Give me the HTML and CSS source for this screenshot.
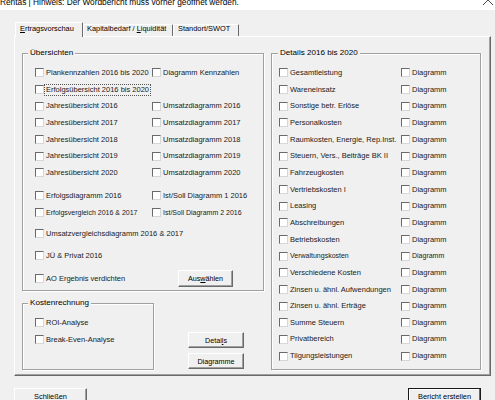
FILE: index.html
```html
<!DOCTYPE html>
<html lang="de">
<head>
<meta charset="utf-8">
<title>Rentas</title>
<link rel="stylesheet" href="styles.css">
</head>
<body>
<div class="titlebar">
  <div class="title">Rentas | Hinweis: Der Wordbericht muss vorher geöffnet werden.</div>
  <svg class="close" width="10" height="6" viewBox="0 0 10 6"><line x1="0" y1="-5" x2="10" y2="5" stroke="#333" stroke-width="0.9"/><line x1="10" y1="-5" x2="0" y2="5" stroke="#333" stroke-width="0.9"/></svg>
</div>
<div class="dialog">
  <div class="tabs">
    <div class="tab active t1"><u>E</u>rtragsvorschau</div>
    <div class="tab t2">Kapitalbedarf / <u>L</u>iquidität</div>
    <div class="tab t3">Standort/SWOT</div>
  </div>
  <div class="panel">
    <div class="col-left">
      <div class="group uebersichten">
        <span class="legend">Übersichten</span>
        <div class="row"><div class="cell c1"><span class="cb"></span><span class="lbl">Plankennzahlen 2016 bis 2020</span></div><div class="cell"><span class="cb"></span><span class="lbl">Diagramm Kennzahlen</span></div></div>
        <div class="row"><div class="cell c1"><span class="cb"></span><span class="lbl focus">Erfolgsübersicht 2016 bis 2020</span></div></div>
        <div class="row"><div class="cell c1"><span class="cb"></span><span class="lbl">Jahresübersicht 2016</span></div><div class="cell"><span class="cb"></span><span class="lbl">Umsatzdiagramm 2016</span></div></div>
        <div class="row"><div class="cell c1"><span class="cb"></span><span class="lbl">Jahresübersicht 2017</span></div><div class="cell"><span class="cb"></span><span class="lbl">Umsatzdiagramm 2017</span></div></div>
        <div class="row"><div class="cell c1"><span class="cb"></span><span class="lbl">Jahresübersicht 2018</span></div><div class="cell"><span class="cb"></span><span class="lbl">Umsatzdiagramm 2018</span></div></div>
        <div class="row"><div class="cell c1"><span class="cb"></span><span class="lbl">Jahresübersicht 2019</span></div><div class="cell"><span class="cb"></span><span class="lbl">Umsatzdiagramm 2019</span></div></div>
        <div class="row"><div class="cell c1"><span class="cb"></span><span class="lbl">Jahresübersicht 2020</span></div><div class="cell"><span class="cb"></span><span class="lbl">Umsatzdiagramm 2020</span></div></div>
        <div class="row m6"><div class="cell c1"><span class="cb"></span><span class="lbl">Erfolgsdiagramm 2016</span></div><div class="cell"><span class="cb"></span><span class="lbl">Ist/Soll Diagramm 1 2016</span></div></div>
        <div class="row"><div class="cell c1"><span class="cb"></span><span class="lbl small">Erfolgsvergleich 2016 &amp; 2017</span></div><div class="cell"><span class="cb"></span><span class="lbl small">Ist/Soll Diagramm 2 2016</span></div></div>
        <div class="row m47"><div class="cell c1"><span class="cb"></span><span class="lbl">Umsatzvergleichsdiagramm 2016 &amp; 2017</span></div></div>
        <div class="row m5"><div class="cell c1"><span class="cb"></span><span class="lbl">JÜ &amp; Privat 2016</span></div></div>
        <div class="row m6"><div class="cell c1"><span class="cb"></span><span class="lbl">AO Ergebnis verdichten</span></div><button class="btn btn-aus">Aus<u>w</u>ählen</button></div>
      </div>
      <div class="lower">
        <div class="group kosten">
          <span class="legend">Kostenrechnung</span>
          <div class="row"><div class="cell"><span class="cb"></span><span class="lbl">ROI-Analyse</span></div></div>
          <div class="row"><div class="cell"><span class="cb"></span><span class="lbl">Break-Even-Analyse</span></div></div>
        </div>
        <div class="btncol">
          <button class="btn btn-sm">Detai<u>l</u>s</button>
          <button class="btn btn-sm">Diagramme</button>
        </div>
      </div>
    </div>
    <div class="col-right">
      <div class="group details">
        <span class="legend">Details 2016 bis 2020</span>
        <div class="row"><div class="cell d1"><span class="cb"></span><span class="lbl">Gesamtleistung</span></div><div class="cell"><span class="cb"></span><span class="lbl">Diagramm</span></div></div>
        <div class="row"><div class="cell d1"><span class="cb"></span><span class="lbl">Wareneinsatz</span></div><div class="cell"><span class="cb"></span><span class="lbl">Diagramm</span></div></div>
        <div class="row"><div class="cell d1"><span class="cb"></span><span class="lbl">Sonstige betr. Erlöse</span></div><div class="cell"><span class="cb"></span><span class="lbl">Diagramm</span></div></div>
        <div class="row"><div class="cell d1"><span class="cb"></span><span class="lbl">Personalkosten</span></div><div class="cell"><span class="cb"></span><span class="lbl">Diagramm</span></div></div>
        <div class="row"><div class="cell d1"><span class="cb"></span><span class="lbl">Raumkosten, Energie, Rep.Inst.</span></div><div class="cell"><span class="cb"></span><span class="lbl">Diagramm</span></div></div>
        <div class="row"><div class="cell d1"><span class="cb"></span><span class="lbl">Steuern, Vers., Beiträge BK II</span></div><div class="cell"><span class="cb"></span><span class="lbl">Diagramm</span></div></div>
        <div class="row"><div class="cell d1"><span class="cb"></span><span class="lbl">Fahrzeugkosten</span></div><div class="cell"><span class="cb"></span><span class="lbl">Diagramm</span></div></div>
        <div class="row"><div class="cell d1"><span class="cb"></span><span class="lbl">Vertriebskosten I</span></div><div class="cell"><span class="cb"></span><span class="lbl">Diagramm</span></div></div>
        <div class="row"><div class="cell d1"><span class="cb"></span><span class="lbl">Leasing</span></div><div class="cell"><span class="cb"></span><span class="lbl">Diagramm</span></div></div>
        <div class="row"><div class="cell d1"><span class="cb"></span><span class="lbl">Abschreibungen</span></div><div class="cell"><span class="cb"></span><span class="lbl">Diagramm</span></div></div>
        <div class="row"><div class="cell d1"><span class="cb"></span><span class="lbl">Betriebskosten</span></div><div class="cell"><span class="cb"></span><span class="lbl">Diagramm</span></div></div>
        <div class="row"><div class="cell d1"><span class="cb"></span><span class="lbl small">Verwaltungskosten</span></div><div class="cell"><span class="cb"></span><span class="lbl small">Diagramm</span></div></div>
        <div class="row"><div class="cell d1"><span class="cb"></span><span class="lbl">Verschiedene Kosten</span></div><div class="cell"><span class="cb"></span><span class="lbl">Diagramm</span></div></div>
        <div class="row"><div class="cell d1"><span class="cb"></span><span class="lbl">Zinsen u. ähnl. Aufwendungen</span></div><div class="cell"><span class="cb"></span><span class="lbl">Diagramm</span></div></div>
        <div class="row"><div class="cell d1"><span class="cb"></span><span class="lbl">Zinsen u. ähnl. Erträge</span></div><div class="cell"><span class="cb"></span><span class="lbl">Diagramm</span></div></div>
        <div class="row"><div class="cell d1"><span class="cb"></span><span class="lbl">Summe Steuern</span></div><div class="cell"><span class="cb"></span><span class="lbl">Diagramm</span></div></div>
        <div class="row"><div class="cell d1"><span class="cb"></span><span class="lbl">Privatbereich</span></div><div class="cell"><span class="cb"></span><span class="lbl">Diagramm</span></div></div>
        <div class="row"><div class="cell d1"><span class="cb"></span><span class="lbl">Tilgungsleistungen</span></div><div class="cell"><span class="cb"></span><span class="lbl">Diagramm</span></div></div>
      </div>
    </div>
  </div>
  <div class="footer">
    <button class="btn btn-lg">Schließen</button>
    <button class="btn btn-lg default">Bericht erstellen</button>
  </div>
</div>
</body>
</html>
```
FILE: styles.css
```css
* { box-sizing: border-box; }
html, body { margin: 0; padding: 0; }
body {
  width: 495px;
  height: 400px;
  overflow: hidden;
  background: #f0f0f0;
  font-family: "Liberation Sans", Arial, sans-serif;
  font-size: 7.5px;
  color: #1a1a1a;
}
.titlebar {
  height: 10px;
  background: #fff;
  display: flex;
  justify-content: space-between;
  align-items: flex-start;
  padding-right: 2.5px;
  overflow: hidden;
}
.title {
  font-size: 8.3px;
  line-height: 5px;
  white-space: nowrap;
  color: #000;
}
.close { display: block; }

.dialog { padding: 12px 0 0 14px; }

.tabs {
  display: flex;
  align-items: flex-end;
  height: 14px;
  padding-left: 1px;
  position: relative;
  z-index: 1;
}
.tab {
  height: 12px;
  border-top: 1px solid #fff;
  border-left: 1px solid #fff;
  border-right: 1px solid #696969;
  border-radius: 1px 1px 0 0;
  padding-left: 4px;
  font-size: 7.4px;
  line-height: 8px;
  white-space: nowrap;
  background: #f0f0f0;
  color: #000;
}
.tab.active {
  height: 15px;
  margin-bottom: -1px;
  line-height: 11px;
}
.t1 { width: 68px; }
.t2 { width: 90px; padding-left: 3px; }
.t3 { width: 66px; }

.panel {
  width: 477px;
  height: 340px;
  border-top: 1px solid #fff;
  border-left: 1px solid #fff;
  border-right: 1px solid #696969;
  border-bottom: 1px solid #696969;
  box-shadow: inset -1px -1px 0 #a0a0a0;
  padding: 16px 9px 0 7px;
  display: flex;
  gap: 7px;
}
.col-left { width: 242px; display: flex; flex-direction: column; }
.col-right { width: 210px; }

.group {
  position: relative;
  border: 1px solid #a0a0a0;
  box-shadow: inset 1px 1px 0 #fff, 1px 1px 0 #fff;
}
.legend {
  position: absolute;
  top: -6px;
  left: 5px;
  padding: 0 2px;
  background: #f0f0f0;
  font-size: 8.1px;
  line-height: 10px;
  white-space: nowrap;
  color: #000;
}
.uebersichten { height: 238px; padding: 10.67px 0 0 12px; }
.details { height: 317px; padding: 10.67px 0 0 7px; }
.details .legend { left: 6px; }
.kosten { width: 132px; height: 67px; padding: 10.67px 0 0 12px; }

.row { display: flex; align-items: center; height: 16.667px; }
.m6 { margin-top: 6.33px; }
.m5 { margin-top: 5.33px; }
.m47 { margin-top: 4.67px; }
.cell { display: flex; align-items: center; white-space: nowrap; }
.c1 { width: 117px; }
.d1 { width: 122px; }
.cb {
  flex: none;
  width: 9px;
  height: 9px;
  background: #fff;
  border: 1px solid;
  border-color: #6a6a6a #d6d6d6 #d6d6d6 #6a6a6a;
  margin-right: 2px;
}
.lbl { line-height: 10px; }
.small { font-size: 7px; }
.focus {
  margin-left: -2px;
  padding: 0 1px;
  border: 1px dotted #555;
  line-height: 10px;
}

.lower { display: flex; margin-top: 12px; }
.btncol {
  margin-left: 34px;
  padding-top: 29px;
  display: flex;
  flex-direction: column;
  gap: 5px;
}

.btn {
  margin: 0;
  padding: 0;
  font-family: inherit;
  font-size: 7.2px;
  color: #000;
  background: #f0f0f0;
  border-top: 1px solid #fff;
  border-left: 1px solid #fff;
  border-right: 1px solid #696969;
  border-bottom: 1px solid #696969;
  box-shadow: inset -1px -1px 0 #a0a0a0;
  display: flex;
  align-items: center;
  justify-content: center;
  white-space: nowrap;
}
.btn-aus { width: 55px; height: 17px; margin-left: 26px; flex: none; }
.btn-sm { width: 56px; height: 16px; }
.btn-lg { width: 73px; height: 17px; font-size: 7.4px; }
.default {
  border: 1px solid #1a1a1a;
  box-shadow: inset -1px -1px 0 #696969, inset 1px 1px 0 #fff;
}

.footer {
  display: flex;
  justify-content: space-between;
  width: 467px;
  margin-top: 12px;
}
```
